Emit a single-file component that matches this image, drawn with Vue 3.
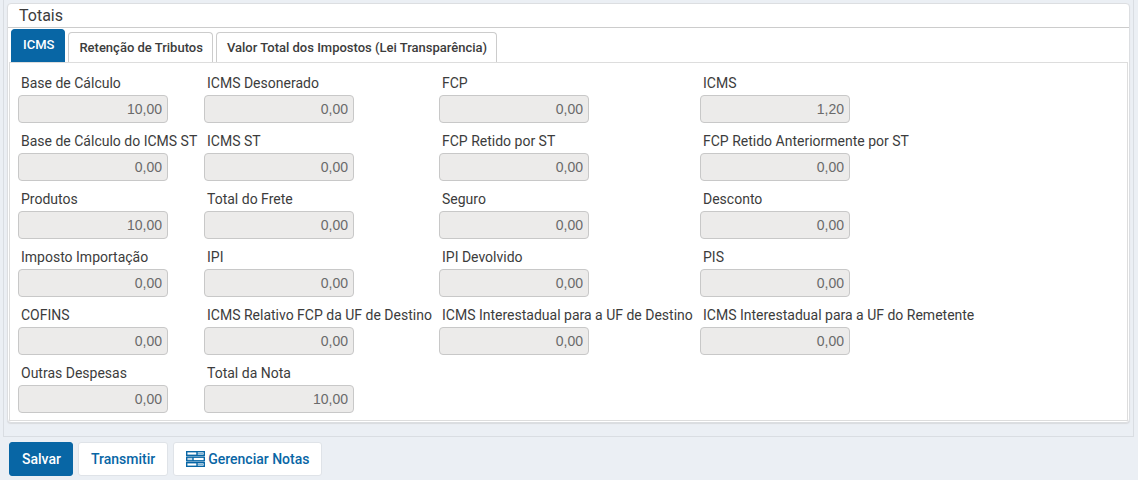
<script setup>
import { ref } from 'vue'

const tabs = ['ICMS', 'Retenção de Tributos', 'Valor Total dos Impostos (Lei Transparência)']
const active = ref(0)

const fields = [
  ['Base de Cálculo', '10,00'],
  ['ICMS Desonerado', '0,00'],
  ['FCP', '0,00'],
  ['ICMS', '1,20'],
  ['Base de Cálculo do ICMS ST', '0,00'],
  ['ICMS ST', '0,00'],
  ['FCP Retido por ST', '0,00'],
  ['FCP Retido Anteriormente por ST', '0,00'],
  ['Produtos', '10,00'],
  ['Total do Frete', '0,00'],
  ['Seguro', '0,00'],
  ['Desconto', '0,00'],
  ['Imposto Importação', '0,00'],
  ['IPI', '0,00'],
  ['IPI Devolvido', '0,00'],
  ['PIS', '0,00'],
  ['COFINS', '0,00'],
  ['ICMS Relativo FCP da UF de Destino', '0,00'],
  ['ICMS Interestadual para a UF de Destino', '0,00'],
  ['ICMS Interestadual para a UF do Remetente', '0,00'],
  ['Outras Despesas', '0,00'],
  ['Total da Nota', '10,00']
]
</script>

<template>
  <main class="page">
    <div class="frame">
      <section class="card">
        <h2 class="title">Totais</h2>
        <div class="tabs" role="tablist">
          <button
            v-for="(tab, i) in tabs"
            :key="tab"
            type="button"
            role="tab"
            class="tab"
            :class="{ active: active === i }"
            :aria-selected="active === i"
            @click="active = i"
          >{{ tab }}</button>
        </div>
        <div class="panel" role="tabpanel">
          <div v-for="([label, value], i) in fields" :key="label" class="field">
            <label :for="'total-' + i">{{ label }}</label>
            <input :id="'total-' + i" type="text" :value="value" readonly />
          </div>
        </div>
      </section>
    </div>
    <div class="actions">
      <button type="button" class="btn primary">Salvar</button>
      <button type="button" class="btn">Transmitir</button>
      <button type="button" class="btn">
        <svg class="icon" viewBox="0 0 19 16" aria-hidden="true">
          <g fill="none" stroke="currentColor">
            <rect x="0.7" y="0.7" width="17.6" height="3.6" stroke-width="1.4" />
            <rect x="0.7" y="6.2" width="17.6" height="3.6" stroke-width="1.4" />
            <rect x="0.7" y="11.7" width="17.6" height="3.6" stroke-width="1.4" />
            <path d="M1 5.2h17M1 10.8h17" stroke-width="0.7" opacity="0.5" />
            <path d="M11 0.5v4M7 6v4M11 11.5v4" stroke-width="1.4" />
            <path d="M11 2.5h6M1 8h6M11 13.5h6" stroke-width="1.2" opacity="0.5" />
          </g>
        </svg>
        Gerenciar Notas
      </button>
    </div>
  </main>
</template>

<style>
html {
  background: #ebeff4;
}
body {
  margin: 0;
}
</style>

<style scoped>
.page {
  font-family: Roboto, "Liberation Sans", sans-serif;
  color: #3c3c3c;
  padding: 0 4px 0 3px;
}
.frame {
  border: 1px solid #d9dde2;
  border-top: 0;
  padding: 3px 3px 13px;
}
.card {
  background: #fff;
  border: 1px solid #dcdee1;
  border-radius: 4px;
  padding-bottom: 1px;
  box-shadow: 0 1px 1px #d9dbde;
}
.title {
  margin: 0;
  padding: 0 11px;
  height: 23px;
  line-height: 23px;
  font-size: 16px;
  font-weight: 400;
  border-bottom: 1px solid #ccc;
}
.tabs {
  display: flex;
  align-items: flex-end;
  gap: 3px;
  height: 34px;
  padding-left: 3px;
}
.tab {
  font: 500 13px/16px Roboto, sans-serif;
  color: #3c3c3c;
  background: #fff;
  border: 1px solid #ccc;
  border-bottom: 0;
  border-radius: 4px 4px 0 0;
  height: 30px;
  padding: 0 9px 0 10px;
}
.tab.active {
  height: 33px;
  padding: 0 10px 2px 11px;
  color: #fff;
  background: #0866a5;
  border-color: #0866a5;
}
.panel {
  display: grid;
  grid-template-columns: 186px 235px 261px 1fr;
  grid-auto-rows: 58px;
  margin: 0 1px;
  padding: 8px 8px 1px;
  border: 1px solid #ddd;
}
.field {
  display: flex;
  flex-direction: column;
  align-items: flex-start;
}
label {
  padding-left: 3px;
  line-height: 24px;
  font-size: 14px;
  white-space: nowrap;
}
input {
  box-sizing: border-box;
  width: 150px;
  height: 28px;
  padding: 0 5px;
  border: 1px solid #c8c8c8;
  border-radius: 4px;
  background: #ecebea;
  color: #6a6a6a;
  font: 14px "Liberation Sans", sans-serif;
  text-align: right;
}
.actions {
  display: flex;
  gap: 5px;
  padding: 5px 6px;
}
.btn {
  display: flex;
  align-items: center;
  gap: 3px;
  height: 34px;
  padding: 0 12px;
  border: 1px solid #dfe3e8;
  border-radius: 3px;
  background: #fff;
  color: #0866a5;
  font: 500 14px Roboto, sans-serif;
}
.btn.primary {
  padding-right: 11px;
  background: #0866a5;
  border-color: #0866a5;
  color: #fff;
}
.icon {
  width: 19px;
  height: 16px;
}
</style>
